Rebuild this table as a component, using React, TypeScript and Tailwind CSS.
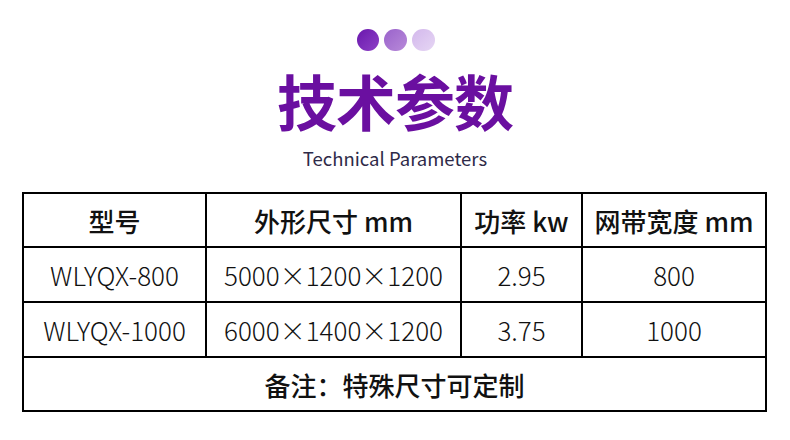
const rows = [
  ['WLYQX-800', '5000×1200×1200', '2.95', '800'],
  ['WLYQX-1000', '6000×1400×1200', '3.75', '1000'],
]

const cols = ['w-[183px]', 'w-[255px]', 'w-[121px]', 'flex-1']

export default function App() {
  return (
    <div className="w-[790px] h-[440px] bg-white font-['Noto_Sans_CJK_SC',sans-serif] overflow-hidden">
      {/* dots */}
      <div className="flex justify-center gap-[5px] pt-[29px] pl-[1px]">
        <span className="w-[22px] h-[22px] rounded-full bg-gradient-to-br from-[#6a14ad] to-[#8e3fc6]" />
        <span className="w-[23px] h-[22px] rounded-full bg-gradient-to-br from-[#9a62cb] to-[#b88ad9]" />
        <span className="w-[23px] h-[22px] rounded-full bg-gradient-to-br from-[#d3b8ec] to-[#e6d6f4]" />
      </div>

      <h1 className="mt-[14px] text-center text-[60px] leading-[70px] font-bold text-[#6a0fa0] tracking-[-1px]">
        技术参数
      </h1>
      <p className="mt-[10px] text-center text-[18.5px] leading-[26px] text-[#2e2a48]">Technical Parameters</p>

      {/* table */}
      <div className="mx-[22px] mt-[21px] w-[745px] border-2 border-black text-[#111] text-[26px]">
        <div className="flex h-[54px] border-b-2 border-black font-medium">
          {['型号', '外形尺寸 mm', '功率 kw', '网带宽度 mm'].map((t, i) => (
            <div key={t} className={`${cols[i]} flex items-center justify-center ${i < 3 ? 'border-r-2 border-black' : ''}`}>
              {t}
            </div>
          ))}
        </div>
        {rows.map((r) => (
          <div key={r[0]} className="flex h-[55px] border-b-2 border-black font-light">
            {r.map((t, i) => (
              <div key={i} className={`${cols[i]} flex items-center justify-center ${i < 3 ? 'border-r-2 border-black' : ''}`}>
                {t}
              </div>
            ))}
          </div>
        ))}
        <div className="flex h-[52px] items-center justify-center font-medium">备注：特殊尺寸可定制</div>
      </div>
    </div>
  )
}
